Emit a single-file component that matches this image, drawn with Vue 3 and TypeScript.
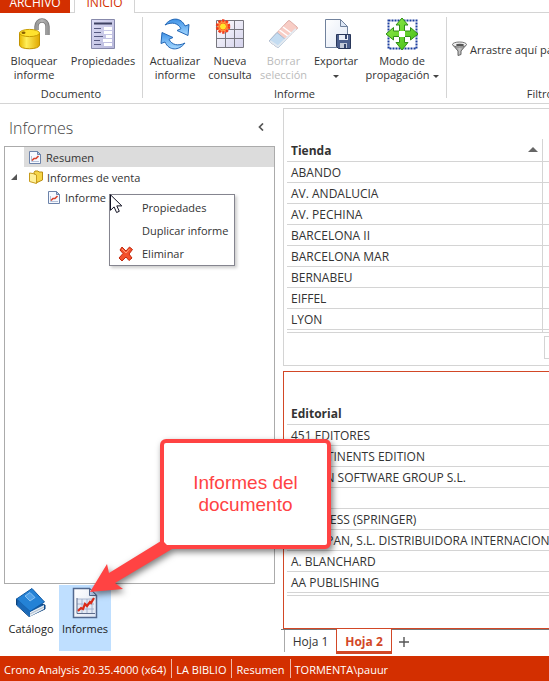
<script setup lang="ts">
import { ref } from 'vue'

const stores: string[] = [
  'ABANDO',
  'AV. ANDALUCIA',
  'AV. PECHINA',
  'BARCELONA II',
  'BARCELONA MAR',
  'BERNABEU',
  'EIFFEL',
  'LYON',
]

const publishers: string[] = [
  '451 EDITORES',
  '5 CONTINENTS EDITION',
  'ACTION SOFTWARE GROUP S.L.',
  'A',
  'A.K. PRESS (SPRINGER)',
  'A. ASPPAN, S.L. DISTRIBUIDORA INTERNACIONAL',
  'A. BLANCHARD',
  'AA PUBLISHING',
]

const status: string[] = ['Crono Analysis 20.35.4000 (x64)', 'LA BIBLIO', 'Resumen', 'TORMENTA\\pauur']

const sheets: string[] = ['Hoja 1', 'Hoja 2']
const activeSheet = ref('Hoja 2')
</script>

<template>
  <div class="app">
    <svg class="defs" aria-hidden="true">
      <defs>
        <linearGradient id="gold" x1="0" x2="1" y1="0" y2="0">
          <stop offset="0" stop-color="#e8b800" />
          <stop offset="0.35" stop-color="#ffee5a" />
          <stop offset="1" stop-color="#e0a800" />
        </linearGradient>
        <linearGradient id="steel" x1="0" x2="1" y1="0" y2="0">
          <stop offset="0" stop-color="#777" />
          <stop offset="0.5" stop-color="#c4c4c4" />
          <stop offset="1" stop-color="#808080" />
        </linearGradient>
        <linearGradient id="shackle" gradientUnits="userSpaceOnUse" x1="16" x2="32" y1="0" y2="0">
          <stop offset="0" stop-color="#8c8c8c" />
          <stop offset="0.5" stop-color="#b4b4b4" />
          <stop offset="1" stop-color="#8c8c8c" />
        </linearGradient>
        <linearGradient id="lilac" x1="0" x2="1" y1="0" y2="1">
          <stop offset="0" stop-color="#dedef6" />
          <stop offset="1" stop-color="#b6b6da" />
        </linearGradient>
        <linearGradient id="cell" x1="0" x2="1" y1="0" y2="1">
          <stop offset="0" stop-color="#ffffff" />
          <stop offset="1" stop-color="#d4d2ec" />
        </linearGradient>
        <linearGradient id="sky" x1="0" x2="0" y1="0" y2="1">
          <stop offset="0" stop-color="#3f92e6" />
          <stop offset="1" stop-color="#a5d8ff" />
        </linearGradient>
        <linearGradient id="paper" x1="0" x2="1" y1="0" y2="1">
          <stop offset="0" stop-color="#ffffff" />
          <stop offset="1" stop-color="#dfe7f5" />
        </linearGradient>
        <linearGradient id="leaf" x1="0" x2="1" y1="0" y2="1">
          <stop offset="0" stop-color="#93ee4c" />
          <stop offset="1" stop-color="#3fba12" />
        </linearGradient>
        <symbol id="report" viewBox="0 0 32 32">
          <path d="M4.500 1.500h16l7 7v22h-23z" fill="url(#paper)" stroke="#53698f" stroke-width="1.500" />
          <path d="M20.500 1.500v7h7z" fill="#b9cdec" stroke="#53698f" />
          <path d="M8 12h17v14H8z" fill="#e4eaf5" />
          <path d="M8 12h17M8 17h17M8 22h17M13 12v14M18 12v14M23 12v14" fill="none" stroke="#9aa9c6" stroke-width="0.800" />
          <path d="M8 11v15.500h18" fill="none" stroke="#5d6d8d" />
          <path d="M9 24l3-3 2 1 2-5 2 2 3-4 1 1 3-5" fill="none" stroke="#dc2a16" stroke-width="2.200" />
        </symbol>
        <symbol id="report-small" viewBox="0 0 12 13">
          <path d="M.5.500h8l3 3v9H.500z" fill="#f6f9ff" stroke="#6c83aa" />
          <path d="M8.500.500v3h3z" fill="#b9cdec" stroke="#6c83aa" />
          <path d="M2.500 5v5.500h7.500" fill="none" stroke="#b6c2d8" />
          <path d="M3 9.500l2-2h2l2.500-2.500" fill="none" stroke="#d8422e" stroke-width="1.600" />
        </symbol>
      </defs>
    </svg>

    <header>
      <nav class="tabs">
        <button class="tab file">ARCHIVO</button>
        <span class="tab-gap"></span>
        <button class="tab home">INICIO</button>
        <span class="tab-rest"></span>
      </nav>
      <div class="ribbon">
        <section class="group document">
          <div class="tools">
            <button class="tool">
              <svg width="32" height="32" viewBox="0 0 32 32">
                <path d="M18.500 12V8.500c0-8 11-8 11 0V17" fill="none" stroke="#777" stroke-width="4.400" />
                <path d="M18.500 12V8.500c0-8 11-8 11 0V17" fill="none" stroke="url(#shackle)" stroke-width="3" />
                <path d="M1.500 15v12c0 5 20 5 20 0V15z" fill="url(#gold)" stroke="#c29300" />
                <ellipse cx="11.500" cy="15" rx="10" ry="3.600" fill="#ffe22e" stroke="#c89c00" />
                <ellipse cx="5.500" cy="14.800" rx="2" ry="1.200" fill="#8a6100" />
              </svg>
              <span>Bloquear<br />informe</span>
            </button>
            <button class="tool">
              <svg width="32" height="32" viewBox="0 0 32 32">
                <path d="M4.500 1.500h23v29h-23z" fill="url(#lilac)" stroke="#8789ab" />
                <path d="M7 5.500h18" stroke="#3f4263" stroke-width="2" />
                <path d="M7 10.500h7M7 14.500h7M7 18.500h9M7 22.500h6M7 26.500h7" stroke="#565980" />
                <path d="M17 9h8v3h-8zM17 13h8v3h-8zM19 17h6v3h-6zM16 21h9v3h-9zM17 25h8v3h-8z" fill="#fff" />
              </svg>
              <span>Propiedades</span>
            </button>
          </div>
          <h2>Documento</h2>
        </section>
        <section class="group report">
          <div class="tools">
            <button class="tool">
              <svg width="32" height="32" viewBox="0 0 32 32">
                <path d="M6 7C12-1 22-1 26 8l4-1.500-1 11-11-5 4-1.800C19 5 13 3.500 6 7z" fill="url(#sky)" stroke="#2467b5" />
                <path d="M26 25C20 33 10 33 6 24l-4 1.500 1-11 11 5-4 1.800C13 27 19 28.500 26 25z" fill="url(#sky)" stroke="#2467b5" />
              </svg>
              <span>Actualizar<br />informe</span>
            </button>
            <button class="tool">
              <svg width="32" height="32" viewBox="0 0 32 32">
                <path d="M2.500 2.500h27v27h-27z" fill="url(#cell)" stroke="#77777f" />
                <path d="M11.500 3v26M20.500 3v26M3 11.500h26M3 20.500h26" stroke="#77777f" />
                <circle cx="9" cy="8.500" r="6" fill="#ff9548" stroke="#f13b1c" stroke-width="2.500" stroke-dasharray="2.400 1.400" />
                <circle cx="9" cy="8.500" r="3.500" fill="#ffe52c" stroke="#ff6d20" />
              </svg>
              <span>Nueva<br />consulta</span>
            </button>
            <button class="tool" disabled>
              <svg width="32" height="32" viewBox="0 0 32 32">
                <path d="M2 22L20 3q1-1 2 0l7 6q1 1 0 2L11 29q-1 1-2 0l-7-5q-1-1 0-2z" fill="#f8cdc5" stroke="#dfaea8" />
                <path d="M2 22l7-7.500 9 7.500-7 7q-1 1-2 0l-7-5q-1-1 0-2z" fill="#c4dcf1" stroke="#a6bdd4" />
                <path d="M11.500 12L21 19M15 9l9.500 7" stroke="#fff" stroke-width="1.500" />
                <path d="M2 23l8 5.500L28 11" fill="none" stroke="#e2e9f0" stroke-width="2" />
              </svg>
              <span>Borrar<br />selección</span>
            </button>
            <button class="tool">
              <svg width="32" height="32" viewBox="0 0 32 32">
                <path d="M5.500 1.500h15l7 7v21h-22z" fill="url(#paper)" stroke="#71829d" />
                <path d="M20.500 1.500v7h7z" fill="#dce6f5" stroke="#71829d" />
                <path d="M16.500 16.500h14v14h-12l-2-2z" fill="#4c5f8c" stroke="#29375a" />
                <path d="M19 17h9v5h-9z" fill="#e9eef7" />
                <path d="M20 25h7v5h-7z" fill="#c3cad8" />
                <path d="M24 26h2v4h-2zM25 17h2v4h-2z" fill="#34446b" />
              </svg>
              <span>Exportar<br /><i class="caret"></i></span>
            </button>
            <button class="tool">
              <svg width="32" height="32" viewBox="0 0 32 32">
                <path d="M2.500 2.500h28v28h-28z" fill="#fff" stroke="#1c3f9f" stroke-width="2" stroke-dasharray="2 1" />
                <path d="M16 0l6 7h-3.500v6h6V9.500L32 16l-7.500 6v-3.500h-6v6H22L16 32l-6-7.500h3.500v-6h-6V22L0 16l7.500-6.500V13h6V7H10z" fill="url(#leaf)" stroke="#318e18" />
                <path d="M13 13h6v6h-6z" fill="#fff" />
              </svg>
              <span>Modo de<br />propagación<i class="caret beside"></i></span>
            </button>
          </div>
          <h2>Informe</h2>
        </section>
        <section class="group filter">
          <div class="hint">
            <svg width="15" height="16" viewBox="0 0 15 16">
              <path d="M.5 3.500L6 10v4.500l3-1V10l5.500-6.500z" fill="url(#steel)" stroke="#666" />
              <ellipse cx="7.500" cy="3.500" rx="7" ry="2.500" fill="#eee" stroke="#777" />
              <ellipse cx="8" cy="4" rx="4" ry="1.200" fill="#555" />
            </svg>
            <span>Arrastre aquí para filtrar</span>
          </div>
          <h2>Filtros</h2>
        </section>
      </div>
    </header>

    <main>
      <aside>
        <div class="aside-head">
          <h1>Informes</h1>
          <button class="collapse" aria-label="Contraer">
            <svg width="6" height="8" viewBox="0 0 6 8"><path d="M5 .5L1.500 4 5 7.500" fill="none" stroke="#555" stroke-width="1.700" /></svg>
          </button>
        </div>
        <ul class="tree">
          <li class="node selected">
            <svg width="12" height="13"><use href="#report-small" /></svg>
            <span>Resumen</span>
          </li>
          <li class="node branch">
            <svg class="expander" width="6" height="6" viewBox="0 0 6 6"><path d="M6 0v6H0z" fill="#555" /></svg>
            <svg width="14" height="14" viewBox="0 0 14 14">
              <path d="M5 2.500l1-1.500h3l1 1h3.500v8L8 12.500z" fill="#f6d548" stroke="#b98d10" />
              <path d="M.5 3l3.500.500L7.500 5v8.500L.5 11.500z" fill="#fff09a" stroke="#c79b1c" />
            </svg>
            <span>Informes de venta</span>
          </li>
          <li class="node leaf">
            <svg width="12" height="13"><use href="#report-small" /></svg>
            <span>Informe 2</span>
            <div class="menu" role="menu">
              <button role="menuitem">Propiedades</button>
              <button role="menuitem">Duplicar informe</button>
              <button role="menuitem">
                <svg class="cross" width="16" height="16" viewBox="0 0 16 16">
                  <path d="M4 1l4 4 3.500-4 3 2.500L11 8l3 4-3 2.500L8 11l-4 4-3-3 4-4.500L2 4z" fill="#f4512c" stroke="#c2280d" stroke-linejoin="round" />
                  <path d="M4 3l4 4 3.500-4" fill="none" stroke="#ff9a77" />
                </svg>
                Eliminar
              </button>
              <svg class="pointer" width="13" height="20" viewBox="0 0 13 20">
                <path d="M.5.800v15.500l3.600-3.400 2.500 5.600 2.700-1.200-2.500-5.400h5z" fill="#fff" stroke="#111122" />
              </svg>
            </div>
          </li>
        </ul>
        <nav class="views">
          <button class="view">
            <svg width="32" height="32" viewBox="0 0 32 32">
              <path d="M1.500 12v6L14 29.500 30 22v-4z" fill="#14599f" stroke="#0d437c" />
              <path d="M4 17l11 8 14-7v4l-14 7.500L3 19z" fill="#e7eef5" />
              <path d="M4 19l11 8 14-7" fill="none" stroke="#9aabbd" stroke-width="0.800" />
              <path d="M1.500 12L17 1.500 29.500 15 15 24.500z" fill="#2482d6" stroke="#1159a2" />
              <path d="M10 9l5-3.500 5 5-5 3.500z" fill="#4fa0e8" stroke="#9bcdf6" stroke-width="0.800" />
              <path d="M4 13.500L15 24.500v5.500L2 18.500z" fill="#1a69b8" />
            </svg>
            <span>Catálogo</span>
          </button>
          <button class="view current">
            <svg width="32" height="32"><use href="#report" /></svg>
            <span>Informes</span>
          </button>
        </nav>
      </aside>

      <div class="sheet">
        <section class="panel">
          <table class="grid split">
            <thead>
              <tr><th><span class="sort">Tienda<i></i></span></th><th></th></tr>
            </thead>
            <tbody>
              <tr v-for="store in stores" :key="store"><td>{{ store }}</td><td></td></tr>
              <tr class="end"><td></td><td></td></tr>
            </tbody>
          </table>
          <div class="pager"></div>
        </section>
        <section class="panel active">
          <table class="grid">
            <thead>
              <tr><th>Editorial</th></tr>
            </thead>
            <tbody>
              <tr v-for="publisher in publishers" :key="publisher"><td>{{ publisher }}</td></tr>
              <tr class="end"><td></td></tr>
            </tbody>
          </table>
        </section>
        <nav class="sheets">
          <button
            v-for="name in sheets"
            :key="name"
            class="sheet-tab"
            :class="{ on: name === activeSheet }"
            @click="activeSheet = name"
          >{{ name }}</button>
          <button class="add" aria-label="Nueva hoja">
            <svg width="10" height="10" viewBox="0 0 10 10"><path d="M5 0v10M0 5h10" stroke="#555" stroke-width="1.400" /></svg>
          </button>
        </nav>
      </div>
    </main>

    <footer>
      <span v-for="item in status" :key="item">{{ item }}</span>
    </footer>

    <div class="callout">
      <svg class="arrow" width="100" height="70" viewBox="0 0 100 70">
        <path d="M2 58l17-28 2 9L73 7l3 1 3 3 6 1-1 3L27 49l8 6z" fill="#ff4343" />
      </svg>
      <p>Informes del<br />documento</p>
    </div>
  </div>
</template>

<style>
body {
  margin: 0;
}
</style>

<style scoped>
.app {
  position: relative;
  display: flex;
  flex-direction: column;
  min-height: 100vh;
  overflow: hidden;
  background: #fff;
  color: #333;
  font: 11px/14px 'Open Sans', 'Noto Sans', sans-serif;
}
.app * {
  box-sizing: border-box;
}
.defs {
  position: absolute;
  width: 0;
  height: 0;
}
button {
  margin: 0;
  padding: 0;
  border: 0;
  background: none;
  color: inherit;
  font: inherit;
}
h1,
h2,
p,
ul {
  margin: 0;
  padding: 0;
  font-weight: 400;
}
svg {
  flex: none;
}

/* Ribbon */
.tabs {
  display: flex;
  align-items: flex-end;
  height: 13px;
  overflow: hidden;
}
.tab {
  height: 20px;
  font-size: 12px;
  line-height: 20px;
}
.file {
  width: 70px;
  background: #d32f00;
  color: #fff;
}
.tab-gap {
  width: 4px;
  border-bottom: 1px solid #d4d4d4;
}
.home {
  width: 61px;
  border: 1px solid #d4d4d4;
  border-width: 0 1px;
  color: #d32f00;
}
.tab-rest {
  flex: 1;
  border-bottom: 1px solid #d4d4d4;
}
.ribbon {
  display: flex;
  height: 91px;
  padding: 4px 0 5px;
  border-bottom: 1px solid #d4d4d4;
}
.group {
  flex: none;
  display: flex;
  flex-direction: column;
  justify-content: space-between;
  border-right: 1px solid #d4d4d4;
}
.group h2 {
  margin-bottom: -3px;
  font-size: 11px;
  line-height: 14px;
  text-align: center;
}
.tools {
  display: grid;
  justify-content: center;
}
.document {
  width: 143px;
}
.document .tools {
  grid-template-columns: 64px 74px;
}
.report {
  width: 304px;
}
.report .tools {
  grid-template-columns: 56px 54px 53px 52px 80px;
}
.filter {
  width: 192px;
}
.tool {
  display: flex;
  flex-direction: column;
  align-items: center;
  gap: 4px;
  padding-top: 1px;
  white-space: nowrap;
}
.tool:disabled {
  color: #bbb;
}
.caret {
  display: inline-block;
  border: 3px solid transparent;
  border-top-color: #444;
  border-bottom: 0;
  vertical-align: middle;
}
.beside {
  margin-left: 3px;
}
.hint {
  display: flex;
  align-items: center;
  gap: 3px;
  padding: 24px 0 0 5px;
  white-space: nowrap;
}
.hint span {
  padding-top: 2px;
}

/* Side panel */
main {
  flex: 1;
  display: flex;
}
aside {
  flex: none;
  display: flex;
  flex-direction: column;
  width: 275px;
  padding: 4px 0 5px 4px;
}
.aside-head {
  display: flex;
  align-items: center;
  justify-content: space-between;
  height: 38px;
  padding: 2px 11px 0 5px;
}
h1 {
  color: #444;
  font-size: 16px;
  font-weight: 300;
  line-height: 24px;
}
.collapse {
  display: flex;
  padding-bottom: 3px;
}
.tree {
  flex: 1;
  border: 1px solid #ababab;
  list-style: none;
}
.node {
  position: relative;
  display: flex;
  align-items: center;
  gap: 5px;
  height: 20px;
  margin-left: 19px;
  padding-left: 5px;
  white-space: nowrap;
}
.node span {
  padding-top: 1px;
}
.selected {
  background: #dcdcdc;
}
.branch {
  margin-left: 0;
  gap: 4px;
}
.expander {
  margin: 0 8px 0 1px;
}
.leaf {
  padding-left: 24px;
}
.menu {
  position: absolute;
  top: 7px;
  left: 85px;
  z-index: 1;
  display: flex;
  flex-direction: column;
  padding: 2px 0 0 32px;
  width: 126px;
  height: 72px;
  border: 1px solid #85858f;
  background: #fff;
  box-shadow: 2px 2px 3px rgba(0, 0, 0, 0.2);
}
.menu button {
  position: relative;
  height: 23px;
  text-align: left;
}
.cross {
  position: absolute;
  top: 4px;
  left: -24px;
}
.pointer {
  position: absolute;
  top: -1px;
  left: 0;
}
.views {
  display: flex;
  gap: 2px;
  padding: 1px 0 0 1px;
}
.view {
  display: flex;
  flex-direction: column;
  align-items: center;
  gap: 3px;
  width: 52px;
  height: 66px;
  padding-top: 2px;
  color: #222;
}
.current {
  background: #bfdfff;
}

/* Worksheet */
.sheet {
  flex: 1;
  min-width: 0;
  padding: 4px 0 0 8px;
}
.panel {
  height: 258px;
  margin-bottom: 5px;
  padding: 30px 0 0 3px;
  border: 1px solid #d4d4d4;
  border-right: 0;
  overflow: hidden;
}
.active {
  margin-bottom: 0;
  border-color: #d24726;
}
.grid {
  width: 100%;
  table-layout: fixed;
  border-collapse: separate;
  border-spacing: 0;
  font-size: 12px;
}
th,
td {
  height: 21px;
  padding: 2px 4px 0;
  border-bottom: 1px solid #d4d4d4;
  text-align: left;
  white-space: nowrap;
}
th {
  height: 23px;
  font-weight: 700;
}
.split th:first-child,
.split td:first-child {
  width: 256px;
  border-right: 1px solid #d4d4d4;
}
.grid .end td {
  height: 3px;
  padding: 0;
}
.sort {
  display: flex;
  align-items: center;
  justify-content: space-between;
}
.sort i {
  margin-bottom: 3px;
  border: 5px solid transparent;
  border-top: 0;
  border-bottom-color: #666;
}
.pager {
  width: 100px;
  height: 23px;
  margin: 3px 0 0 257px;
  border: 1px solid #d4d4d4;
}
.sheets {
  display: flex;
  margin-left: -2px;
  padding-left: 3px;
  border-top: 1px solid #777;
}
.sheet-tab {
  width: 52px;
  height: 22px;
  padding: 0;
  border-left: 1px solid #aaa;
  font-size: 12px;
  line-height: 24px;
}
.sheet-tab.on {
  width: 56px;
  height: 25px;
  margin-top: -1px;
  padding: 2px 0 0;
  border: 1px solid #d24726;
  border-width: 0 1px 3px;
  background: #fff;
  color: #d24726;
  font-weight: 700;
  line-height: 22px;
}
.add {
  display: flex;
  align-items: center;
  padding-left: 7px;
  height: 24px;
}

/* Status bar */
footer {
  display: flex;
  height: 25px;
  padding: 3px 0;
  background: #d32f00;
  color: #fff;
  line-height: 21px;
  white-space: nowrap;
}
footer span {
  padding: 0 5px 0 4px;
  border-right: 1px solid #f0b8a8;
}
footer span:last-child {
  border: 0;
}

/* Annotation over the window */
.callout {
  position: absolute;
  top: 439px;
  left: 160px;
  z-index: 2;
  display: flex;
  align-items: center;
  justify-content: center;
  width: 171px;
  height: 110px;
  border: 4px solid #ff4343;
  border-radius: 6px;
  background: #fff;
  color: #ff4343;
  font: 19px/22px 'Liberation Sans', Arial, sans-serif;
  text-align: center;
  filter: drop-shadow(2px 3px 3px rgba(0, 0, 0, 0.5));
}
.arrow {
  position: absolute;
  top: 91px;
  left: -76px;
}
</style>
